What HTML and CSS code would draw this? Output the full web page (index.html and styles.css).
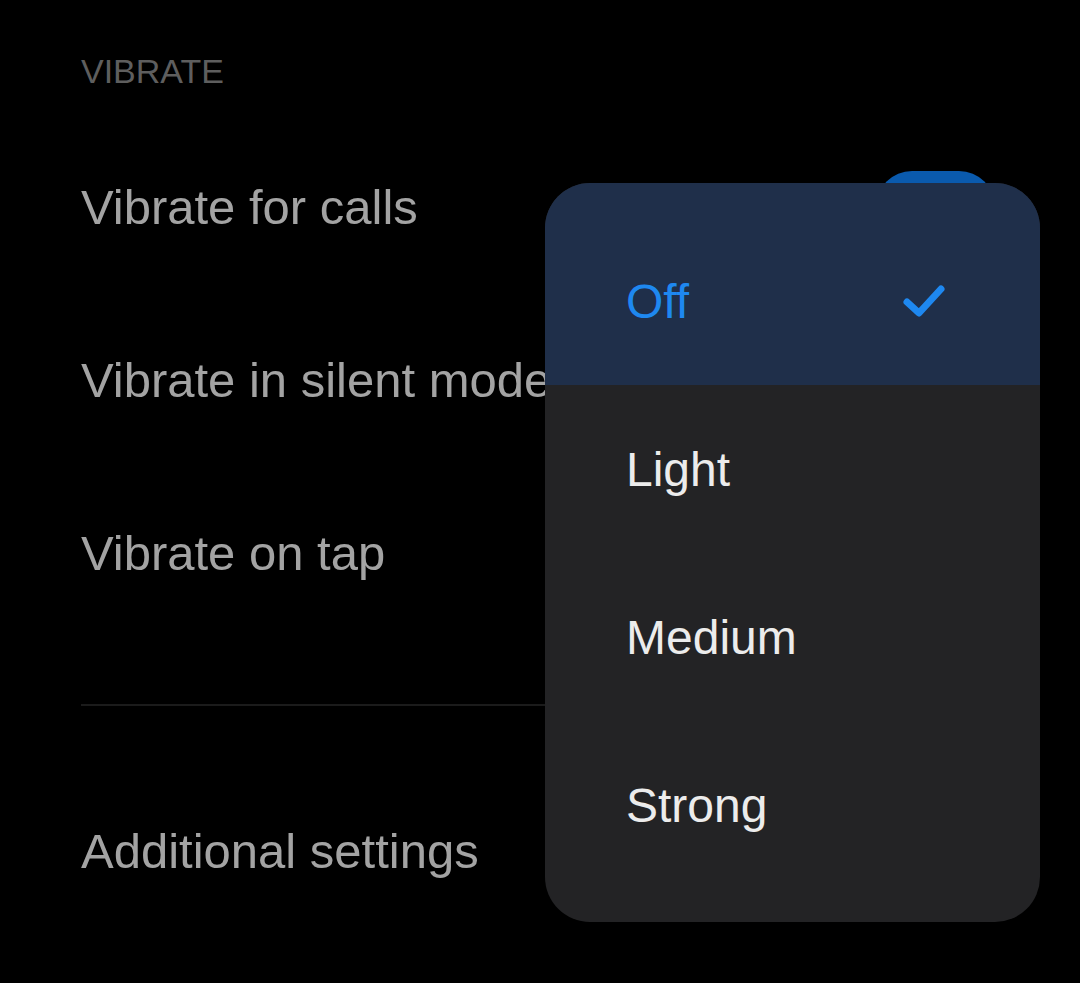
FILE: index.html
```html
<!DOCTYPE html>
<html lang="en">
<head>
  <meta charset="UTF-8">
  <meta name="viewport" content="width=device-width, initial-scale=1.0">
  <title>Vibrate</title>
  <link rel="stylesheet" href="styles.css">
</head>
<body>
  <div class="screen">
    <div class="settings">
      <div class="section-title">VIBRATE</div>
      <div class="row">
        <span class="label">Vibrate for calls</span>
        <span class="toggle"></span>
      </div>
      <div class="row">
        <span class="label">Vibrate in silent mode</span>
        <span class="toggle"></span>
      </div>
      <div class="row">
        <span class="label">Vibrate on tap</span>
        <span class="toggle"></span>
      </div>
      <div class="divider"></div>
      <div class="row">
        <span class="label">Additional settings</span>
      </div>
    </div>

    <!-- intensity picker opened over the list -->
    <ul class="menu">
      <li class="menu-item selected">
        <span>Off</span>
        <svg class="check" width="46" height="38" viewBox="0 0 46 38">
          <path d="M6 20 L18 31 L40 7" fill="none" stroke="#1e88f0" stroke-width="7" stroke-linecap="round" stroke-linejoin="round"/>
        </svg>
      </li>
      <li class="menu-item">Light</li>
      <li class="menu-item">Medium</li>
      <li class="menu-item">Strong</li>
    </ul>
  </div>
</body>
</html>
```

FILE: styles.css
```css
body {
  margin: 0;
  background-color: #000;
  font-family: "Liberation Sans", Arial, sans-serif;
}
.screen {
  position: relative;
  width: 1080px;
  height: 983px;
  overflow: hidden;
}
.settings {
  padding: 51px 85px 0 81px;
}
.section-title {
  font-size: 34px;
  line-height: 40px;
  color: #5e5e5e;
  padding-bottom: 29px;
}
.row {
  height: 173px;
  display: flex;
  align-items: center;
  justify-content: space-between;
}
.label {
  font-size: 49px;
  color: #a3a3a3;
}
.toggle {
  width: 119px;
  height: 72px;
  border-radius: 36px;
  background-color: #0a5aad;
}
.divider {
  height: 2px;
  background-color: #1b1b1b;
  margin: 65px 0 58px;
}
.menu {
  position: absolute;
  left: 545px;
  top: 183px;
  width: 495px;
  margin: 0;
  padding: 0 0 33px;
  list-style: none;
  background-color: #232325;
  border-radius: 45px;
  overflow: hidden;
}
.menu-item {
  height: 168px;
  display: flex;
  align-items: center;
  justify-content: space-between;
  padding: 0 93px 0 81px;
  font-size: 48px;
  color: #ececec;
}
.menu-item.selected {
  height: 202px;
  padding-top: 34px;
  box-sizing: border-box;
  background-color: #1f2f4a;
  color: #1e88f0;
}
.check {
  display: block;
}
```
